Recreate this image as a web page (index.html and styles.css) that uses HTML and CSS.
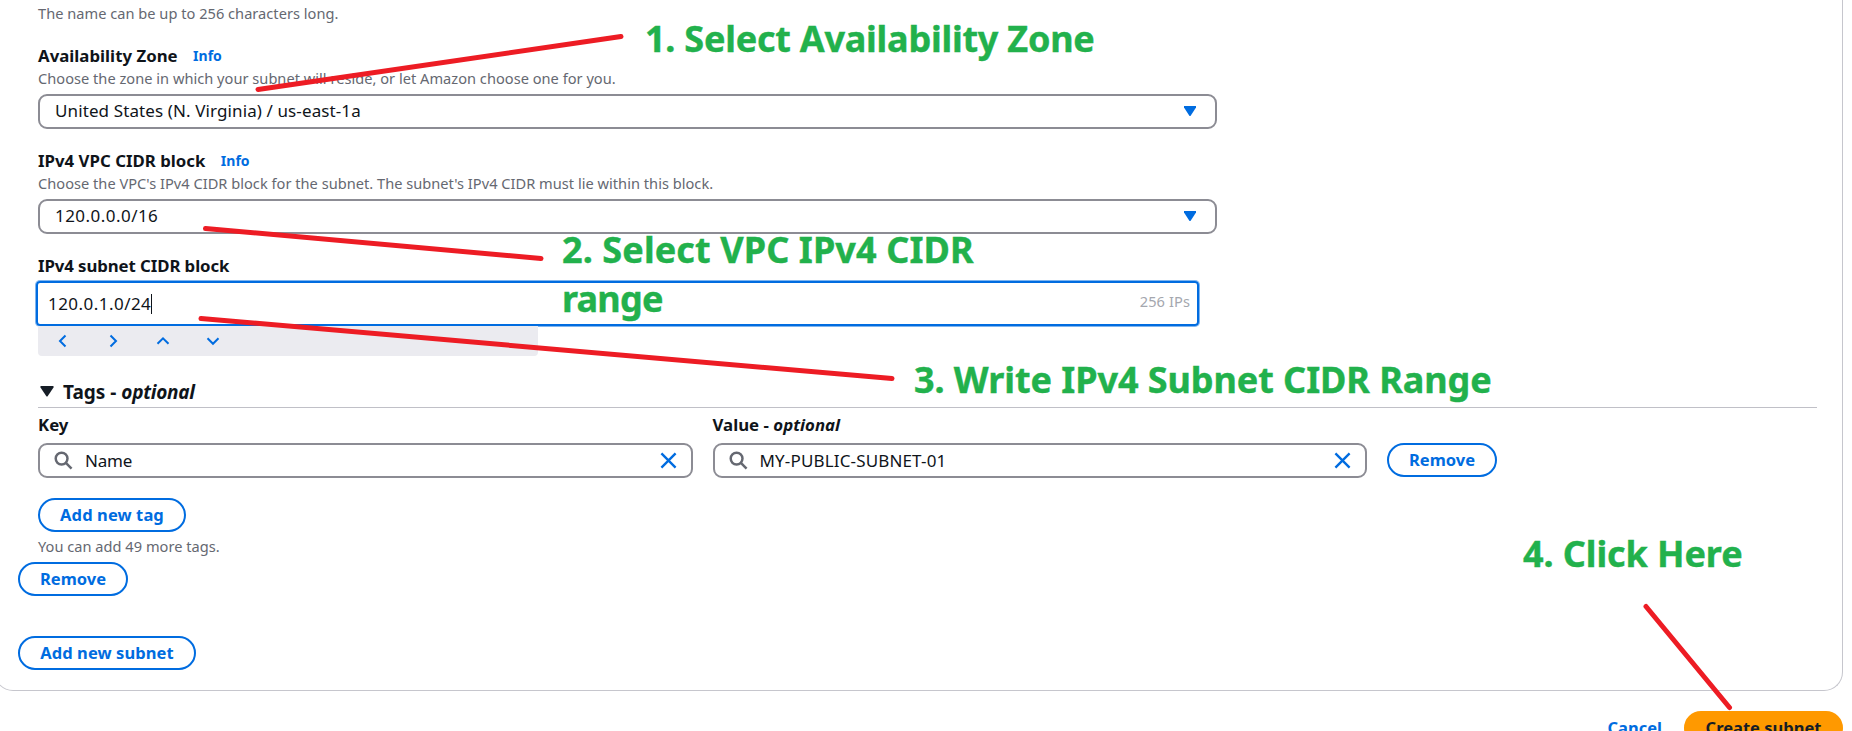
FILE: index.html
```html
<!DOCTYPE html>
<html lang="en">
<head>
<meta charset="utf-8">
<title>Create subnet</title>
<link rel="stylesheet" href="styles.css">
</head>
<body>
<main class="page">
  <section class="panel">
    <div class="form">
      <p class="hint">The name can be up to 256 characters long.</p>

      <div class="field field-zone">
        <div class="label">Availability Zone <a class="info">Info</a></div>
        <p class="hint">Choose the zone in which your subnet will reside, or let Amazon choose one for you.</p>
        <div class="select"><span class="zone-value">United States (N. Virginia) / us-east-1a</span><svg class="caret" viewBox="0 0 12 10"><path d="M0 0h12v1.500L6.800 9.500q-.8 1-1.600 0L0 1.500z"/></svg></div>
      </div>

      <div class="field">
        <div class="label">IPv4 VPC CIDR block <a class="info">Info</a></div>
        <p class="hint">Choose the VPC's IPv4 CIDR block for the subnet. The subnet's IPv4 CIDR must lie within this block.</p>
        <div class="select"><span class="number">120.0.0.0/16</span><svg class="caret" viewBox="0 0 12 10"><path d="M0 0h12v1.500L6.800 9.500q-.8 1-1.600 0L0 1.500z"/></svg></div>
      </div>

      <div class="field">
        <div class="label label-subnet">IPv4 subnet CIDR block</div>
        <div class="cidr"><span class="number">120.0.1.0/24</span><i class="cursor"></i><span class="count">256 IPs</span></div>
        <div class="stepper">
          <svg viewBox="0 0 14 14"><path d="M9.5 1.5 4 7l5.5 5.5"/></svg>
          <svg viewBox="0 0 14 14"><path d="M4.5 1.5 10 7l-5.5 5.5"/></svg>
          <svg viewBox="0 0 14 14"><path d="M1.5 9.8 7 4.3l5.5 5.5"/></svg>
          <svg viewBox="0 0 14 14"><path d="M1.5 4.3 7 9.8l5.5-5.5"/></svg>
        </div>
      </div>

      <h2 class="tags-title"><svg viewBox="0 0 14 11"><path d="M.5 0h13v1.500L7.800 10q-.8 1-1.600 0L.5 1.500z"/></svg><span>Tags - <em>optional</em></span></h2>

      <div class="tag-row">
        <div class="tag-col">
          <div class="label">Key</div>
          <div class="search"><svg class="lens" viewBox="0 0 20 20"><circle cx="8" cy="8" r="6.2"/><path d="m12.5 12.5 6 6"/></svg><span>Name</span><svg class="clear" viewBox="0 0 18 18"><path d="m1.500 1.500 15 15m0-15-15 15"/></svg></div>
        </div>
        <div class="tag-col">
          <div class="label">Value - <em>optional</em></div>
          <div class="search"><svg class="lens" viewBox="0 0 20 20"><circle cx="8" cy="8" r="6.2"/><path d="m12.5 12.5 6 6"/></svg><span class="caps">MY-PUBLIC-SUBNET-01</span><svg class="clear" viewBox="0 0 18 18"><path d="m1.500 1.500 15 15m0-15-15 15"/></svg></div>
        </div>
        <button class="btn btn-remove">Remove</button>
      </div>

      <button class="btn btn-tag">Add new tag</button>
      <p class="hint hint-tags">You can add 49 more tags.</p>
    </div>
    <div class="panel-actions">
      <button class="btn btn-remove">Remove</button>
      <button class="btn btn-subnet">Add new subnet</button>
    </div>
  </section>
  <footer class="footer"><a class="cancel">Cancel</a><button class="btn btn-create">Create subnet</button></footer>
</main>

<svg class="pointers" viewBox="0 0 1852 731">
  <path d="M258 89.5 621 36.5M205.5 228.5 541 258.5M201 318.5 892 378.5M1646 606.5 1729.5 707.5"/>
</svg>
<div class="note note-1">1. Select Availability Zone</div>
<div class="note note-2">2. Select VPC IPv4 CIDR<br><span>range</span></div>
<div class="note note-3">3. Write IPv4 Subnet CIDR Range</div>
<div class="note note-4">4. Click Here</div>
</body>
</html>
```
FILE: styles.css
```css
* { box-sizing: border-box; }

body {
  margin: 0;
  height: 731px;
  overflow: hidden;
  position: relative;
  background: #fff;
  color: #0f141a;
  font: 17px/20px "Noto Sans", "Open Sans", sans-serif;
}

p, h2 { margin: 0; }
svg { display: block; flex: none; overflow: visible; }

.panel {
  width: 1849px;
  height: 697px;
  margin: -6px 0 0 -6px;
  padding: 10px 24px 0 23px;
  border: 1px solid #c6c6cd;
  border-top: 0;
  border-radius: 0 0 19px 19px;
}

.form { padding: 0 1px 0 20px; }

.hint {
  color: #656871;
  font-size: 14.6px;
  line-height: 18px;
  padding-bottom: 2px;
  letter-spacing: .02px;
}

.field { margin-top: 22px; }

.label {
  display: flex;
  white-space: pre;
  font-size: 16.8px;
  font-weight: 700;
  letter-spacing: .02px;
  margin-bottom: 3px;
}

.info {
  color: #006ce0;
  font-size: 14px;
  margin-left: 11px;
}

.select {
  display: flex;
  align-items: center;
  justify-content: space-between;
  width: 1179px;
  height: 35px;
  margin-top: 5px;
  padding: 0 18px 1px 15px;
  border: 2px solid #8c8c94;
  border-radius: 9px;
}

.zone-value { letter-spacing: .11px; }
.number { letter-spacing: .46px; }
.caret { width: 12px; height: 10px; fill: #006ce0; margin-right: 1px; }

.label-subnet { letter-spacing: -.08px; margin-bottom: 5px; }

.cidr {
  display: flex;
  align-items: center;
  width: 1163px;
  height: 45px;
  margin-left: -2px;
  padding: 1px 7px 0 10px;
  border: 2px solid #006ce0;
  box-shadow: 0 0 0 1px #7fb5ef;
  border-radius: 4px;
}

.cursor { width: 1px; height: 20px; background: #0f141a; }
.count { margin-left: auto; color: #a4a7ae; font-size: 14.6px; letter-spacing: .1px; padding-bottom: 6px; }

.stepper {
  display: flex;
  align-items: center;
  gap: 36px;
  width: 500px;
  height: 30px;
  padding-left: 18px;
  background: #ebebf0;
  border-radius: 0 0 4px 4px;
}
.stepper svg { width: 14px; height: 14px; fill: none; stroke: #006ce0; stroke-width: 2; }

.tags-title {
  display: flex;
  align-items: center;
  width: 1779px;
  height: 52px;
  padding: 20px 0 0 2px;
  border-bottom: 1px solid #c0c0c7;
  font-size: 19px;
}
.tags-title em { letter-spacing: -.25px; }
.tags-title svg { width: 14px; height: 11px; margin-right: 9px; fill: #161d26; }

.tag-row { display: flex; gap: 20px; padding-top: 7px; align-items: flex-end; }
.tag-col { width: 654.5px; }
.tag-col .label { margin-bottom: 8px; }

.search {
  display: flex;
  align-items: center;
  height: 35px;
  padding: 0 14px 0 14px;
  border: 2px solid #8c8c94;
  border-radius: 9px;
}
.search span { letter-spacing: -.2px; }
.search .caps { letter-spacing: .15px; }
.lens { width: 19px; height: 19px; margin-right: 12px; fill: none; stroke: #656871; stroke-width: 2.6; }
.clear { width: 17px; height: 17px; margin-left: auto; fill: none; stroke: #006ce0; stroke-width: 2.5; }

.btn {
  display: block;
  height: 34px;
  padding: 0 0 1px;
  border: 2px solid #006ce0;
  border-radius: 17px;
  background: #fff;
  color: #006ce0;
  font: 700 16.5px/20px "Noto Sans", "Open Sans", sans-serif;
  white-space: nowrap;
}
.btn-remove { width: 110px; }
.tag-row .btn { margin-bottom: 1px; }
.btn-tag { width: 148px; margin-top: 20px; letter-spacing: .1px; }
.hint-tags { margin-top: 5px; }

.panel-actions { display: flex; flex-direction: column; gap: 40px; padding-top: 5px; }
.btn-subnet { width: 178px; letter-spacing: .08px; }

.footer {
  display: flex;
  align-items: center;
  justify-content: flex-end;
  gap: 22px;
  width: 1843px;
  margin-top: 20px;
}
.cancel { color: #006ce0; font-weight: 700; font-size: 16.5px; }
.btn-create { width: 159px; border-color: #ff9900; background: #ff9900; color: #161d26; }

/* Annotations drawn over the form */
.pointers {
  position: absolute;
  inset: 0;
  width: 1852px;
  height: 731px;
  fill: none;
  stroke: #ed1c24;
  stroke-width: 5;
  stroke-linecap: round;
}
.note {
  position: absolute;
  color: #22b14c;
  font-size: 36px;
  font-weight: 700;
  line-height: 49px;
  white-space: nowrap;
  -webkit-text-stroke: .4px #22b14c;
}
.note-1 { left: 645px; top: 14px; letter-spacing: -.24px; }
.note-2 { left: 562px; top: 225px; letter-spacing: .1px; }
.note-2 span { letter-spacing: -.8px; }
.note-3 { left: 914px; top: 355px; letter-spacing: -.07px; }
.note-4 { left: 1523px; top: 529px; letter-spacing: -.1px; }
```
